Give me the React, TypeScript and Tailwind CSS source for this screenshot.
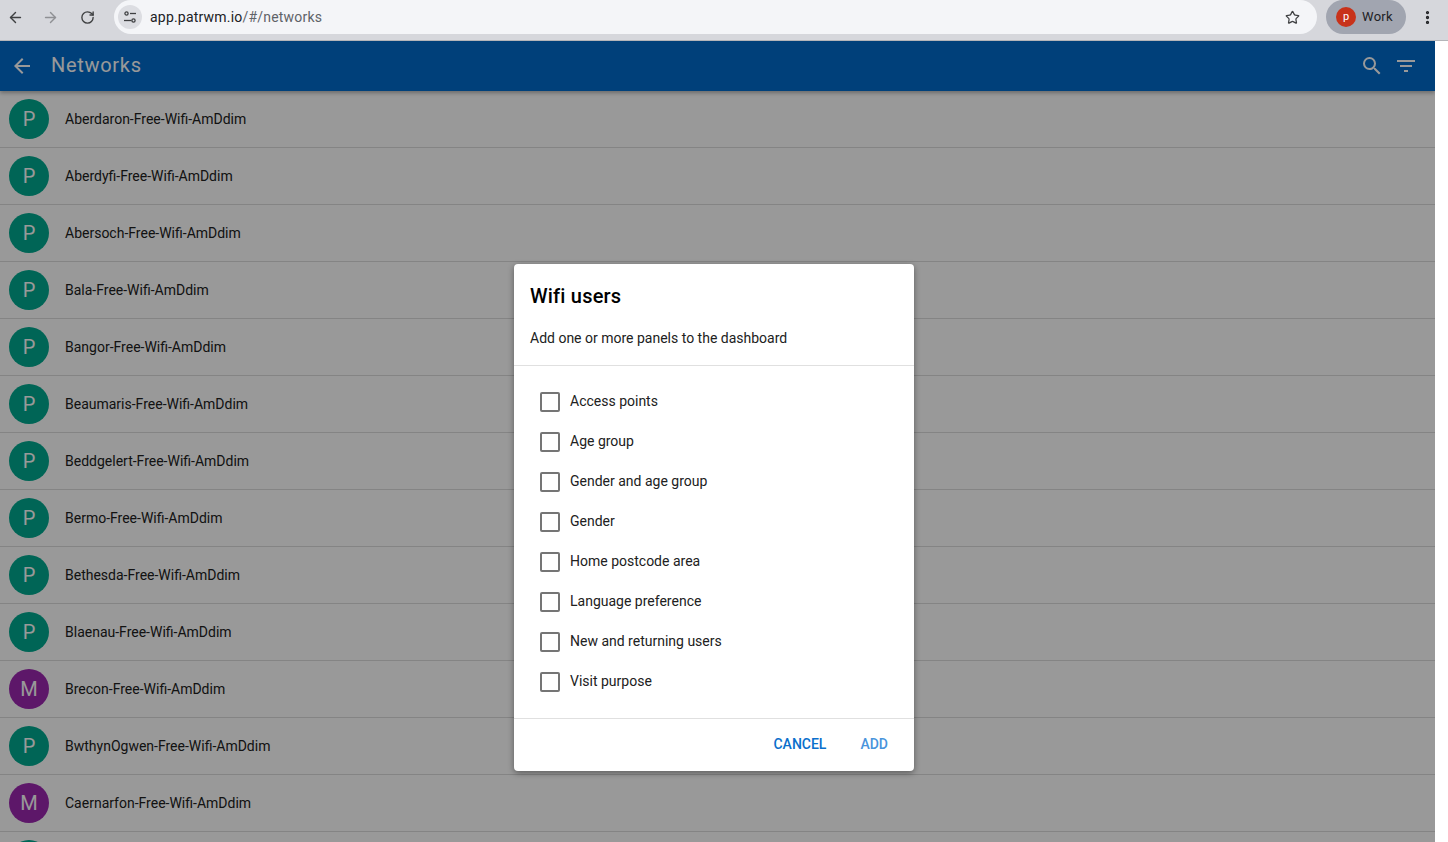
import { ArrowLeft, ArrowRight, EllipsisVertical, RotateCw, Star } from "lucide-react";

const networks = [
  { name: "Aberdaron-Free-Wifi-AmDdim", letter: "P" },
  { name: "Aberdyfi-Free-Wifi-AmDdim", letter: "P" },
  { name: "Abersoch-Free-Wifi-AmDdim", letter: "P" },
  { name: "Bala-Free-Wifi-AmDdim", letter: "P" },
  { name: "Bangor-Free-Wifi-AmDdim", letter: "P" },
  { name: "Beaumaris-Free-Wifi-AmDdim", letter: "P" },
  { name: "Beddgelert-Free-Wifi-AmDdim", letter: "P" },
  { name: "Bermo-Free-Wifi-AmDdim", letter: "P" },
  { name: "Bethesda-Free-Wifi-AmDdim", letter: "P" },
  { name: "Blaenau-Free-Wifi-AmDdim", letter: "P" },
  { name: "Brecon-Free-Wifi-AmDdim", letter: "M" },
  { name: "BwthynOgwen-Free-Wifi-AmDdim", letter: "P" },
  { name: "Caernarfon-Free-Wifi-AmDdim", letter: "M" },
  { name: "", letter: "" },
];

const panels = [
  "Access points",
  "Age group",
  "Gender and age group",
  "Gender",
  "Home postcode area",
  "Language preference",
  "New and returning users",
  "Visit purpose",
];

function BrowserBar() {
  return (
    <div className="flex h-[41px] items-center border-b border-[#b4b5b9] bg-[#d6d7dc] pb-[6px]">
      <div className="flex w-[114px] shrink-0 items-center text-[#3f4042]">
        <ArrowLeft className="ml-[7px] size-[17px]" strokeWidth={2} />
        <ArrowRight className="ml-[18px] size-[17px] text-[#8f9094]" strokeWidth={2} />
        <RotateCw className="ml-[21px] size-[15px]" strokeWidth={2.2} />
      </div>
      <div className="flex h-[34px] w-[1203px] shrink-0 items-center rounded-full bg-[#f4f5f8] pl-[4px] pr-[17px]">
        <div className="flex size-[24px] items-center justify-center rounded-full bg-[#dcdde2]">
          <svg viewBox="0 0 16 16" className="size-[16px]" fill="none" stroke="#3f4042" strokeWidth="1.3">
            <circle cx="4.5" cy="4.5" r="1.6" />
            <path d="M8 4.5h6" />
            <circle cx="11.5" cy="11.5" r="1.6" />
            <path d="M2 11.5h7.5" />
          </svg>
        </div>
        <div className="ml-[8px] flex-1 text-[14px] tracking-[0.2px] text-[#202124]">
          app.patrwm.io<span className="text-[#5f6368]">/#/networks</span>
        </div>
        <Star className="size-[15px] text-[#3f4042]" strokeWidth={2} />
      </div>
      <div className="ml-[9px] flex h-[34px] w-[80px] shrink-0 items-center rounded-full bg-[#a1a5b0] pl-[10px]">
        <div className="flex size-[20px] items-center justify-center rounded-full bg-[#c8321a] text-[11px] text-white">p</div>
        <span className="ml-[6px] text-[13px] tracking-[0.3px] text-[#202124]">Work</span>
      </div>
      <EllipsisVertical className="ml-[13px] size-[17px] text-[#202124]" strokeWidth={2.6} />
    </div>
  );
}

function NetworkRow({ name, letter }: { name: string; letter: string }) {
  return (
    <div className="flex h-[57px] shrink-0 items-center border-b border-[#dcdcdc] pl-[9px]">
      <div
        className={
          letter === "M"
            ? "flex size-[40px] items-center justify-center rounded-full bg-[#9c27b0] text-[20px] text-white"
            : "flex size-[40px] items-center justify-center rounded-full bg-[#00a98f] text-[20px] text-white"
        }
      >
        {letter}
      </div>
      <div className="ml-[16px] text-[14px] text-[#212121]">{name}</div>
    </div>
  );
}

function PanelDialog() {
  return (
    <div className="absolute left-[514px] top-[223px] w-[400px] rounded-[4px] bg-white text-[14px] text-[#212121] shadow-[0_2px_6px_rgba(0,0,0,0.4)]">
      <div className="h-[102px] border-b border-[#e0e0e0] px-[16px] pt-[20px]">
        <h2 className="text-[20px] font-medium leading-[24px] tracking-[0.2px] text-black">Wifi users</h2>
        <p className="mt-[20px] leading-[20px] text-[#212121]">Add one or more panels to the dashboard</p>
      </div>
      <div className="h-[353px] border-b border-[#e0e0e0] pl-[26px] pt-[16px]">
        {panels.map((panel) => (
          <label key={panel} className="flex h-[40px] items-center">
            <span className="size-[20px] rounded-[2px] border-2 border-[#757575]" />
            <span className="ml-[10px] pb-[2px]">{panel}</span>
          </label>
        ))}
      </div>
      <div className="flex h-[52px] items-center justify-end pb-[2px] pr-[26px] text-[14px] font-medium">
        <button className="text-[#0a6fcc]">CANCEL</button>
        <button className="ml-[34px] text-[#4a94dc]">ADD</button>
      </div>
    </div>
  );
}

export default function App() {
  return (
    <div className="flex h-[842px] w-[1448px] flex-col overflow-hidden bg-white font-['Roboto',sans-serif]">
      <BrowserBar />
      <div className="flex min-h-0 flex-1">
        <div className="relative w-[1435px] overflow-hidden bg-white">
          <div className="flex h-[50px] items-center bg-[#006bcc] pl-[10px] pr-[17px] text-white shadow-[0_2px_4px_rgba(0,0,0,0.3)]">
            <svg viewBox="0 0 24 24" className="size-[24px]" fill="currentColor">
              <path d="M20 11H7.83l5.59-5.59L12 4l-8 8 8 8 1.41-1.41L7.83 13H20v-2z" />
            </svg>
            <h1 className="ml-[17px] flex-1 pb-[2px] text-[20px] tracking-[0.7px]">Networks</h1>
            <svg viewBox="0 0 24 24" className="size-[24px]" fill="currentColor">
              <path d="M15.5 14h-.79l-.28-.27A6.471 6.471 0 0 0 16 9.5 6.5 6.5 0 1 0 9.5 16c1.61 0 3.09-.59 4.23-1.57l.27.28v.79l5 4.99L20.49 19l-4.99-5zm-6 0C7.01 14 5 11.99 5 9.5S7.01 5 9.5 5 14 7.01 14 9.5 11.99 14 9.5 14z" />
            </svg>
            <svg viewBox="0 0 24 24" className="ml-[10px] size-[24px]" fill="currentColor">
              <path d="M10 18h4v-2h-4v2zM3 6v2h18V6H3zm3 7h12v-2H6v2z" />
            </svg>
          </div>
          <div className="flex flex-col">
            {networks.map((network, index) => (
              <NetworkRow key={index} name={network.name} letter={network.letter} />
            ))}
          </div>
          <div className="absolute inset-0 bg-black/40" />
          <PanelDialog />
        </div>
        <div className="w-[13px] bg-white" />
      </div>
    </div>
  );
}
